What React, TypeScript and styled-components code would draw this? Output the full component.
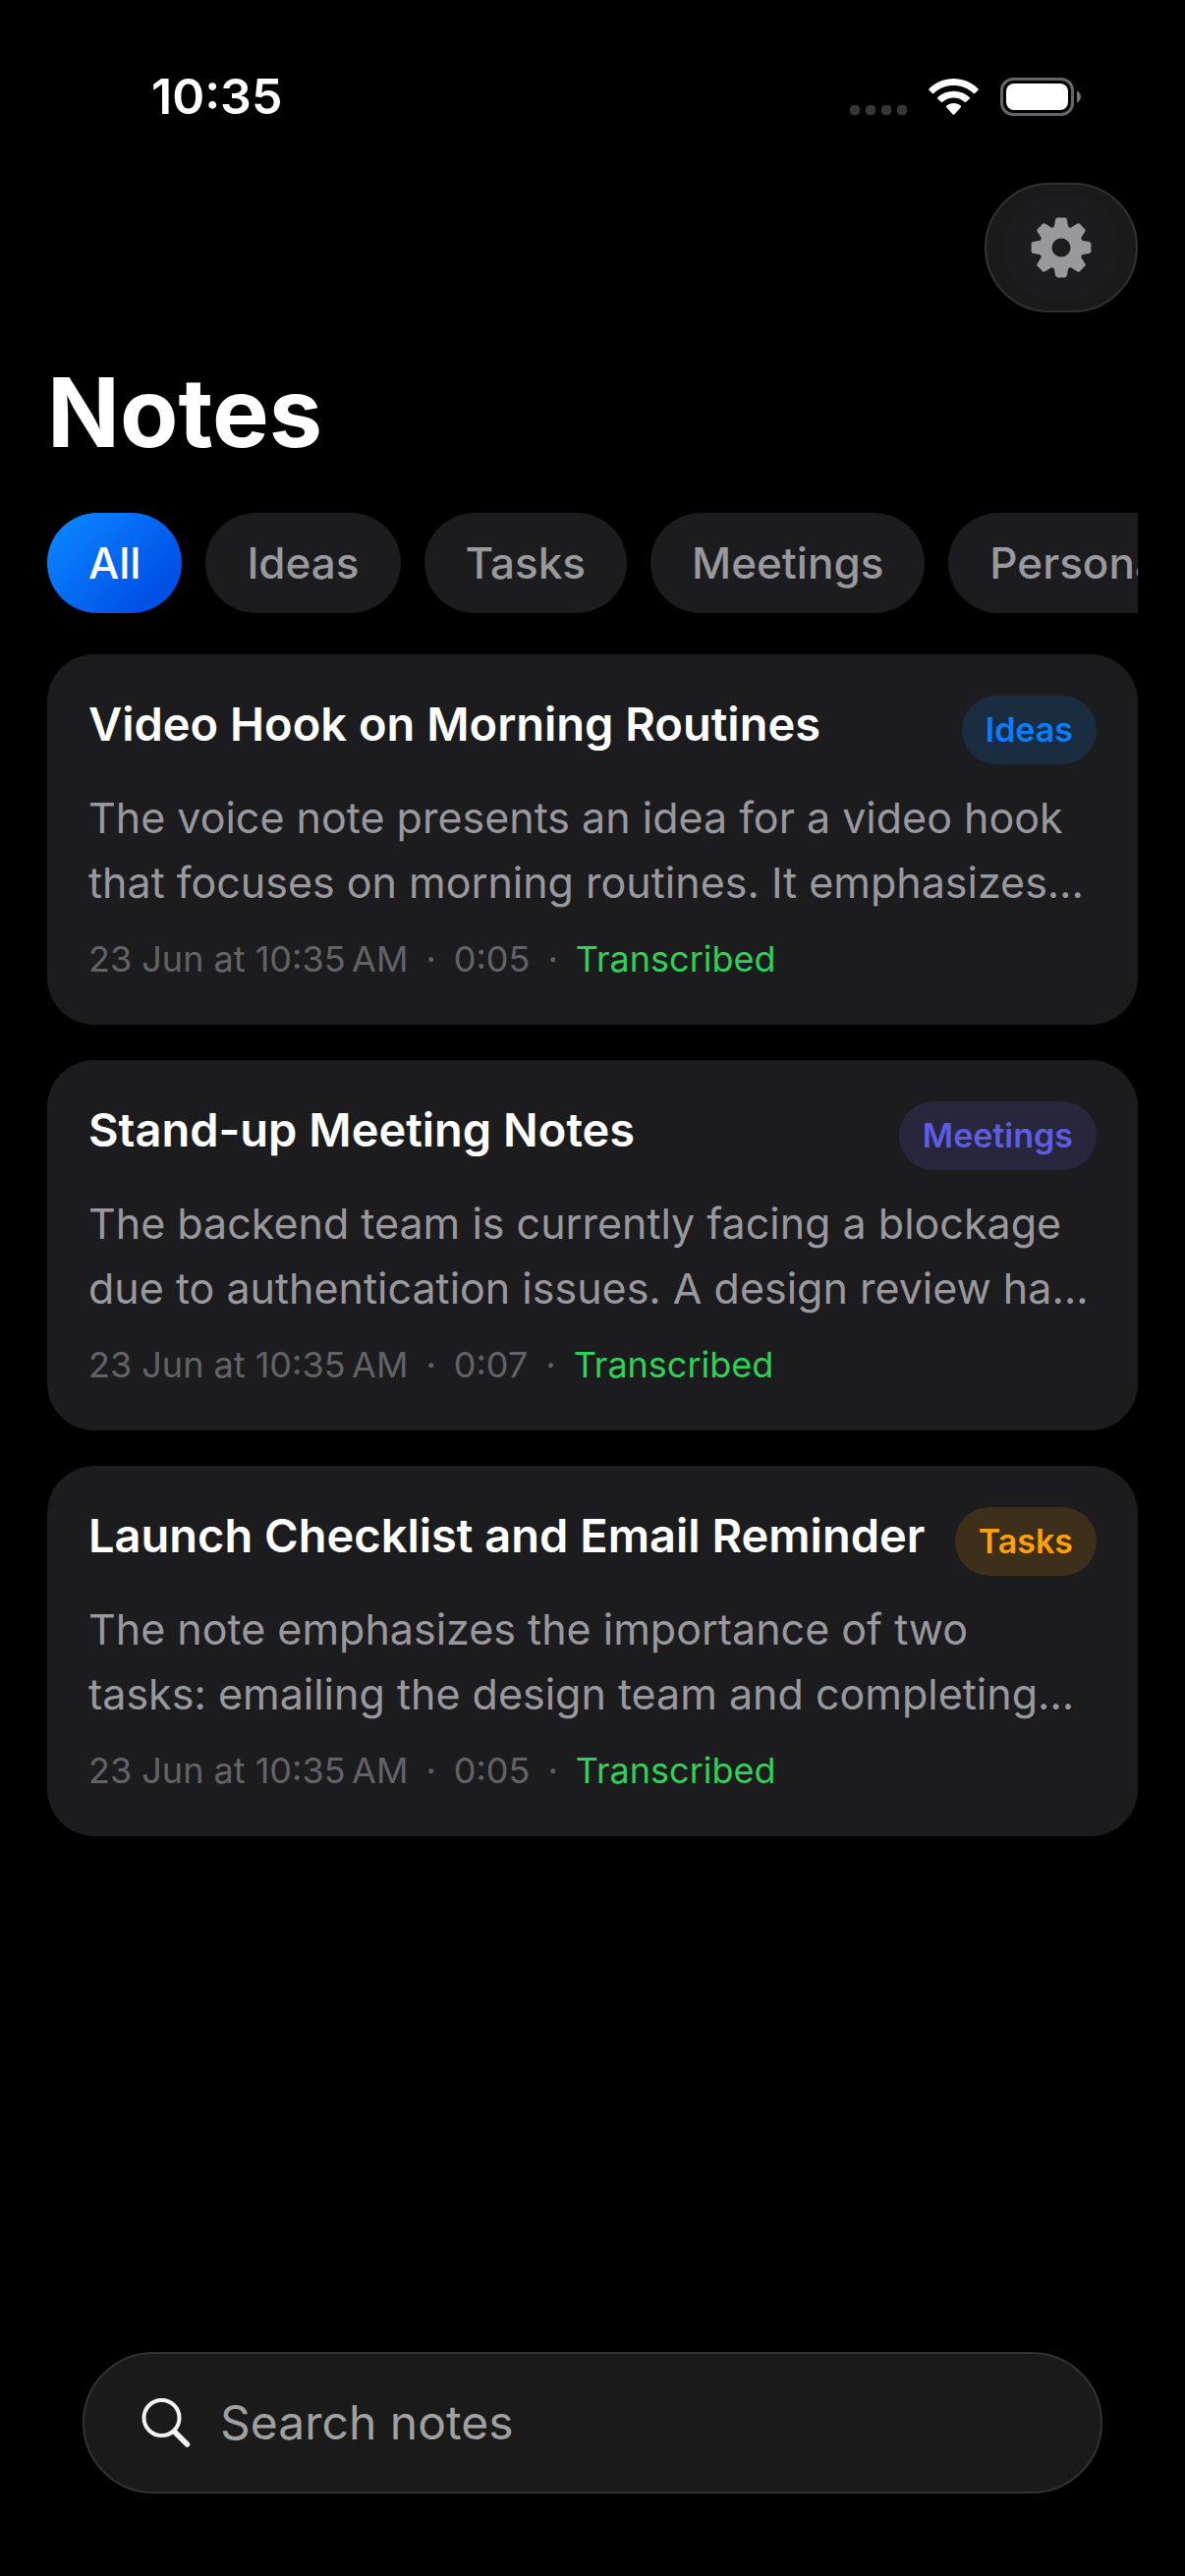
import React, { useState } from "react";
import styled, { createGlobalStyle, css } from "styled-components";

const GlobalStyle = createGlobalStyle`
  *, *::before, *::after { box-sizing: border-box; }
  html { background: #000; }
  body {
    margin: 0;
    background: #000;
    color: #fff;
    font-family: Inter, "Liberation Sans", sans-serif;
    -webkit-font-smoothing: antialiased;
  }
  button, input { font: inherit; color: inherit; }
`;

const Screen = styled.div`
  min-height: 100vh;
  display: flex;
  flex-direction: column;
`;

const StatusBar = styled.header`
  display: flex;
  justify-content: space-between;
  align-items: center;
  height: 186px;
  padding: 10px 106px 0 154px;
`;

const Clock = styled.time`
  font-size: 50px;
  line-height: 60px;
  font-weight: 600;
`;

const StatusIcons = styled.div`
  display: flex;
  align-items: center;
  gap: 22px;
`;

const Main = styled.main`
  flex: 1;
  display: flex;
  flex-direction: column;
  padding: 0 48px;
`;

const Toolbar = styled.div`
  display: flex;
  justify-content: flex-end;
`;

const SettingsButton = styled.button`
  display: grid;
  place-items: center;
  width: 156px;
  height: 132px;
  padding: 0;
  border: 2px solid #323232;
  border-radius: 66px;
  background: #1a1a1a;
  cursor: pointer;
`;

const SettingsFace = styled.span`
  display: grid;
  place-items: center;
  width: 120px;
  height: 108px;
  border-radius: 54px;
  background: #1c1c1e;
`;

const PageTitle = styled.h1`
  margin: 42px 0 0;
  font-size: 97px;
  line-height: 120px;
  font-weight: 700;
`;

const Chips = styled.nav`
  display: flex;
  gap: 24px;
  margin-top: 42px;
  overflow: hidden;
`;

const Chip = styled.button<{ $active: boolean }>`
  flex: none;
  height: 102px;
  padding: 0 42px;
  border: 0;
  border-radius: 51px;
  background: #1c1c1e;
  color: #98989d;
  font-size: 44px;
  line-height: 54px;
  font-weight: 500;
  cursor: pointer;
  ${(p) =>
    p.$active &&
    css`
      background: linear-gradient(135deg, #0a84ff 10%, #0050e6 80%);
      color: #fff;
    `}
`;

const NoteList = styled.section`
  display: flex;
  flex-direction: column;
  gap: 36px;
  margin-top: 42px;
`;

const Card = styled.article`
  display: flex;
  flex-direction: column;
  gap: 21px;
  padding: 42px;
  border-radius: 48px;
  background: #1c1c1e;
`;

const CardHeader = styled.div`
  display: flex;
  justify-content: space-between;
  align-items: flex-start;
  gap: 24px;
`;

const CardTitle = styled.h2`
  margin: 0;
  font-size: 47px;
  line-height: 58px;
  font-weight: 600;
`;

const Badge = styled.span<{ $color: string; $fill: string }>`
  flex: none;
  padding: 0 24px;
  border-radius: 35px;
  background: ${(p) => p.$fill};
  color: ${(p) => p.$color};
  font-size: 34px;
  line-height: 70px;
  font-weight: 600;
`;

const Summary = styled.p`
  margin: 0;
  color: #98989d;
  font-size: 43px;
  line-height: 66px;
`;

const Meta = styled.div`
  display: flex;
  gap: 18px;
  color: #636366;
  font-size: 36px;
  line-height: 49px;
`;

const Status = styled.span`
  color: #30d158;
`;

const SearchDock = styled.footer`
  padding: 84px;
`;

const SearchBar = styled.label`
  display: flex;
  align-items: center;
  gap: 30px;
  height: 144px;
  padding: 0 58px;
  border: 2px solid #323232;
  border-radius: 72px;
  background: #1a1a1a;
`;

const SearchInput = styled.input`
  flex: 1;
  min-width: 0;
  padding: 0;
  border: 0;
  outline: 0;
  background: transparent;
  color: #fff;
  font-size: 48px;
  line-height: 60px;
  &::placeholder {
    color: #a0a0a0;
    opacity: 1;
  }
`;

const CellularIcon = () => (
  <svg width="58" height="39" viewBox="0 0 58 39" fill="#363636" aria-hidden="true">
    {[0, 16, 32, 48].map((x) => (
      <rect key={x} x={x} y="28" width="10" height="10" rx="4" />
    ))}
  </svg>
);

const WifiIcon = () => (
  <svg width="51" height="39" viewBox="0 0 51 39" fill="#fff" aria-hidden="true">
    <path d="M.6 11.2C14.6-2.4 36.4-2.4 50.4 11.2c.5.5.5 1 0 1.500l-3.300 3.200c-.5.5-1 .5-1.500 0C34.400 5.400 16.600 5.400 5.400 15.900c-.5.5-1 .5-1.500 0L.6 12.700c-.5-.5-.5-1 0-1.500Z" />
    <path d="M9.300 20c9.200-8.500 23.200-8.500 32.400 0 .5.500.5 1 0 1.500l-3.500 3.300c-.5.500-1 .5-1.500 0-6.400-5.700-16-5.700-22.400 0-.5.500-1 .5-1.500 0l-3.500-3.300c-.5-.5-.5-1 0-1.500Z" />
    <path d="M18.200 28.700c4.200-3.500 10.400-3.500 14.600 0 .5.500.5 1 0 1.500l-6.500 7.200c-.5.600-1.100.6-1.600 0l-6.500-7.200c-.5-.5-.5-1 0-1.500Z" />
  </svg>
);

const BatteryIcon = () => (
  <svg width="82" height="39" viewBox="0 0 82 39" aria-hidden="true">
    <rect x="1.500" y="1.500" width="72" height="36" rx="11.500" fill="none" stroke="#656567" strokeWidth="3" />
    <rect x="6" y="6" width="63" height="27" rx="8" fill="#fff" />
    <path d="M78 13.500c5.300 2.200 5.300 9.800 0 12Z" fill="#747476" />
  </svg>
);

const GearIcon = () => (
  <svg width="62" height="62" viewBox="-31 -31 62 62" aria-hidden="true">
    <g fill="#98989d">
      {[0, 45, 90, 135, 180, 225, 270, 315].map((angle) => (
        <path
          key={angle}
          transform={`rotate(${angle})`}
          d="M-10-19.500C-8-20.300-7.300-21.300-7-22.600L-5.900-28C-5.600-29.700-5-30.400-3.400-30.400H3.400C5-30.400 5.600-29.700 5.900-28L7-22.600C7.300-21.300 8-20.300 10-19.500Z"
        />
      ))}
    </g>
    <circle r="15.500" fill="none" stroke="#98989d" strokeWidth="12" />
  </svg>
);

const SearchIcon = () => (
  <svg width="50" height="52" viewBox="0 0 50 52" fill="none" stroke="#f2f2f2" strokeLinecap="round" aria-hidden="true">
    <circle cx="20.500" cy="21" r="18" strokeWidth="4" />
    <path d="M34 35.500 46.500 48" strokeWidth="5.500" />
  </svg>
);

const categories = ["All", "Ideas", "Tasks", "Meetings", "Personal"];

const badgeColors: Record<string, { color: string; fill: string }> = {
  Ideas: { color: "#0a7dff", fill: "#192c40" },
  Meetings: { color: "#5e5ce6", fill: "#27263c" },
  Tasks: { color: "#ff9f0a", fill: "#3e2f1b" },
};

const notes = [
  {
    title: "Video Hook on Morning Routines",
    category: "Ideas",
    summary:
      "The voice note presents an idea for a video hook that focuses on morning routines. It emphasizes…",
    date: "23 Jun at 10:35\u202fAM",
    length: "0:05",
  },
  {
    title: "Stand-up Meeting Notes",
    category: "Meetings",
    summary:
      "The backend team is currently facing a blockage due to authentication issues. A design review ha…",
    date: "23 Jun at 10:35\u202fAM",
    length: "0:07",
  },
  {
    title: "Launch Checklist and Email Reminder",
    category: "Tasks",
    summary:
      "The note emphasizes the importance of two tasks: emailing the design team and completing…",
    date: "23 Jun at 10:35\u202fAM",
    length: "0:05",
  },
];

export default function App() {
  const [selected, setSelected] = useState("All");
  const [query, setQuery] = useState("");

  const visible = notes.filter(
    (n) =>
      (selected === "All" || n.category === selected) &&
      n.title.toLowerCase().includes(query.toLowerCase())
  );

  return (
    <Screen>
      <GlobalStyle />
      <StatusBar>
        <Clock>10:35</Clock>
        <StatusIcons>
          <CellularIcon />
          <WifiIcon />
          <BatteryIcon />
        </StatusIcons>
      </StatusBar>
      <Main>
        <Toolbar>
          <SettingsButton aria-label="Settings">
            <SettingsFace>
              <GearIcon />
            </SettingsFace>
          </SettingsButton>
        </Toolbar>
        <PageTitle>Notes</PageTitle>
        <Chips aria-label="Categories">
          {categories.map((name) => (
            <Chip
              key={name}
              $active={name === selected}
              aria-pressed={name === selected}
              onClick={() => setSelected(name)}
            >
              {name}
            </Chip>
          ))}
        </Chips>
        <NoteList>
          {visible.map((note) => (
            <Card key={note.title}>
              <CardHeader>
                <CardTitle>{note.title}</CardTitle>
                <Badge
                  $color={badgeColors[note.category].color}
                  $fill={badgeColors[note.category].fill}
                >
                  {note.category}
                </Badge>
              </CardHeader>
              <Summary>{note.summary}</Summary>
              <Meta>
                <span>{note.date}</span>
                <span>·</span>
                <span>{note.length}</span>
                <span>·</span>
                <Status>Transcribed</Status>
              </Meta>
            </Card>
          ))}
        </NoteList>
      </Main>
      <SearchDock>
        <SearchBar>
          <SearchIcon />
          <SearchInput
            type="text"
            placeholder="Search notes"
            aria-label="Search notes"
            value={query}
            onChange={(e) => setQuery(e.target.value)}
          />
        </SearchBar>
      </SearchDock>
    </Screen>
  );
}
